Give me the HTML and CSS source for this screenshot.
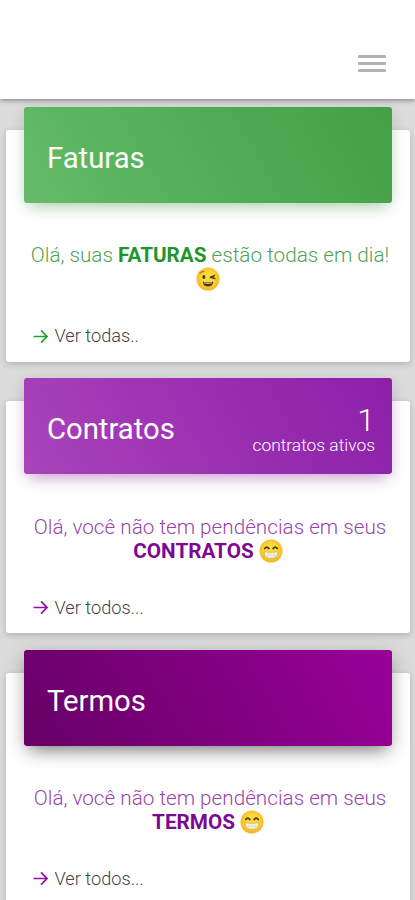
FILE: index.html
```html
<!DOCTYPE html>
<html lang="pt-BR">
<head>
<meta charset="utf-8">
<meta name="viewport" content="width=device-width, initial-scale=1">
<title>Painel</title>
<link rel="stylesheet" href="styles.css">
</head>
<body>
<svg class="defs" aria-hidden="true">
  <defs>
    <radialGradient id="face" cx="50%" cy="45%" r="55%">
      <stop offset="0.5" stop-color="#ffd83b"/>
      <stop offset="1" stop-color="#f5b21c"/>
    </radialGradient>
    <symbol id="wink" viewBox="0 0 24 24">
      <circle cx="12" cy="12" r="11.5" fill="url(#face)"/>
      <path d="M4 6.2Q5.5 4.2 8 4.6" fill="none" stroke="#a9781c" stroke-width="1.3" stroke-linecap="round"/>
      <ellipse cx="7.9" cy="10" rx="1.5" ry="1.9" fill="#49391b"/>
      <path d="M18.5 8.6L14.4 10.3L18.8 11.5" fill="none" stroke="#49391b" stroke-width="1.5" stroke-linecap="round" stroke-linejoin="round"/>
      <path d="M6.6 14.4Q12 16.2 17.4 14.4Q16.6 19.4 12 19.4Q7.4 19.4 6.6 14.4Z" fill="#49391b"/>
      <path d="M8 15.2Q12 16.4 16 15.2L15.6 16.3Q12 17.2 8.4 16.3Z" fill="#fff3ca"/>
    </symbol>
    <symbol id="grin" viewBox="0 0 24 24">
      <circle cx="12" cy="12" r="11.5" fill="url(#face)"/>
      <path d="M5.8 9.6Q7.8 6.8 9.8 9.6M14.2 9.6Q16.2 6.8 18.2 9.6" fill="none" stroke="#49391b" stroke-width="1.8" stroke-linecap="round"/>
      <path d="M5.2 12.8Q12 14 18.8 12.8Q19 19.4 12 19.4Q5 19.4 5.2 12.8Z" fill="#f8f7ec" stroke="#cfa94a" stroke-width=".7"/>
      <path d="M5.6 16H18.4M9 13.6V18.8M12 13.8V19.2M15 13.6V18.8" stroke="#d5d0b8" stroke-width=".6"/>
    </symbol>
    <symbol id="arrow" viewBox="0 0 16 16">
      <path d="M.5 8H14.4M8.6 1.5L14.9 8L8.6 14.5" fill="none" stroke="currentColor" stroke-width="1.8"/>
    </symbol>
  </defs>
</svg>

<header class="navbar">
  <button class="menu" aria-label="Menu"><span></span><span></span><span></span></button>
</header>

<main class="cards">
  <section class="card green">
    <div class="card-header"><h2>Faturas</h2></div>
    <p class="message"><span class="lead">Olá, suas <b>FATURAS</b> estão todas em dia!</span><br><svg class="emoji"><use href="#wink"/></svg></p>
    <a class="more"><svg class="arrow"><use href="#arrow"/></svg>Ver todas..</a>
  </section>

  <section class="card purple">
    <div class="card-header">
      <h2>Contratos</h2>
      <div class="count"><span class="number">1</span><span class="label">contratos ativos</span></div>
    </div>
    <p class="message"><span class="lead">Olá, você não tem pendências em seus</span><br><b>CONTRATOS</b> <svg class="emoji"><use href="#grin"/></svg></p>
    <a class="more"><svg class="arrow"><use href="#arrow"/></svg>Ver todos...</a>
  </section>

  <section class="card plum">
    <div class="card-header"><h2>Termos</h2></div>
    <p class="message"><span class="lead">Olá, você não tem pendências em seus</span><br><b>TERMOS</b> <svg class="emoji"><use href="#grin"/></svg></p>
    <a class="more"><svg class="arrow"><use href="#arrow"/></svg>Ver todos...</a>
  </section>
</main>
</body>
</html>
```
FILE: styles.css
```css
* { box-sizing: border-box; }

html, body { height: 900px; overflow: hidden; }

body {
  margin: 0;
  background: #dbdbdb;
  font-family: Roboto, "Liberation Sans", sans-serif;
  font-weight: 300;
}

.defs { display: block; width: 0; height: 0; }

.navbar {
  position: relative;
  display: flex;
  justify-content: flex-end;
  height: 98.5px;
  padding: 55px 29px 0 0;
  background: #fff;
  box-shadow: 0 1px 5px rgba(0, 0, 0, .45);
}

.menu {
  display: flex;
  flex-direction: column;
  gap: 4px;
  width: 28px;
  height: 18px;
  padding: 0;
  border: 0;
  background: none;
}

.menu span { flex: none; width: 28px; height: 3px; border-radius: 1px; background: #b2b2b2; }

.cards {
  display: flex;
  flex-direction: column;
  gap: 39.4px;
  padding: 31.5px 5px 0 6px;
}

.card {
  flex: none;
  height: 232px;
  padding: 0 18px;
  border-radius: 3px;
  background: #fff;
  box-shadow: 0 2px 6px rgba(0, 0, 0, .2);
}

.card-header {
  display: flex;
  justify-content: space-between;
  align-items: center;
  height: 96px;
  margin-top: -23px;
  padding: 0 17px 0 23px;
  border-radius: 3px;
  color: #fff;
}

.green .card-header {
  background: linear-gradient(60deg, #66bb6a, #5ab55e 25%, #43a047);
  box-shadow: 0 8px 16px -6px rgba(76, 175, 80, .45), 0 3px 16px rgba(0, 0, 0, .09);
}

.purple .card-header {
  background: linear-gradient(60deg, #a944bb, #9c30b2 50%, #8c20a8);
  box-shadow: 0 8px 16px -6px rgba(156, 39, 176, .45), 0 3px 16px rgba(0, 0, 0, .09);
}

.plum .card-header {
  background: linear-gradient(60deg, #660066, #990099);
  box-shadow: 0 9px 16px -6px rgba(0, 0, 0, .45), 0 4px 22px rgba(0, 0, 0, .16);
}

h2 { margin: 5px 0 0; font-size: 29.25px; line-height: 36px; font-weight: 400; }
.plum h2 { margin-top: 6px; }

.count { display: flex; flex-direction: column; align-items: flex-end; padding-top: 7px; }
.number { font-size: 32px; line-height: 32px; }
.label { font-size: 17.4px; line-height: 19px; }

.message {
  height: 49px;
  margin: 40px -10px 0;
  font-size: 20.7px;
  line-height: 24px;
  text-align: center;
  white-space: nowrap;
}

.lead { padding-left: 4px; }
.message b { font-weight: 700; }
.green .message { color: #4fa454; }
.purple .message, .plum .message { color: #9945aa; }
.purple .message { margin-top: 40.6px; }
.green b { color: #21962a; }
.purple b, .plum b { color: #7c0795; }

.emoji { width: 24px; height: 24px; vertical-align: -5px; }

.more {
  display: flex;
  align-items: center;
  gap: 7px;
  margin: 32px 0 0 8.5px;
  color: #444;
  font-size: 18.2px;
  line-height: 24px;
}

.arrow { width: 15px; height: 15px; }
.green .arrow { color: #22a32c; }
.purple .arrow, .plum .arrow { color: #8f12a3; }
```
